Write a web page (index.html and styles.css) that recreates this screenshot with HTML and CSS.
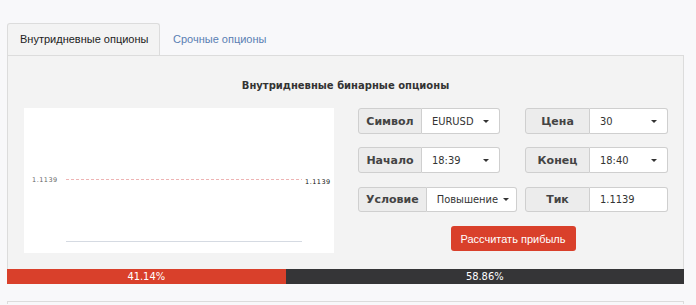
FILE: index.html
```html
<!DOCTYPE html>
<html lang="ru">
<head>
  <meta charset="UTF-8" />
  <title>Бинарные опционы</title>
  <link rel="stylesheet" href="styles.css">
</head>
<body>
  <div class="tabs">
    <div class="tab active">Внутридневные опционы</div>
    <div class="tab">Срочные опционы</div>
  </div>

  <div class="panel">
    <h2 class="title">Внутридневные бинарные опционы</h2>
    <div class="content">
      <div class="chart">
        <svg width="310" height="145" viewBox="0 0 310 145">
          <line x1="42" y1="71.5" x2="278" y2="71.5" stroke="#eeb4b4" stroke-width="1" stroke-dasharray="3,2" />
          <line x1="42" y1="133.5" x2="278" y2="133.5" stroke="#d5dae2" stroke-width="1" />
          <text x="8" y="74" class="tick">1.1139</text>
          <text x="281" y="76" class="tick dark">1.1139</text>
        </svg>
      </div>

      <div class="form">
        <div class="grid">
          <div class="group">
            <span class="addon">Символ</span>
            <span class="select">EURUSD <i class="caret"></i></span>
          </div>
          <div class="group">
            <span class="addon wide">Цена</span>
            <span class="select">30 <i class="caret"></i></span>
          </div>
          <div class="group">
            <span class="addon">Начало</span>
            <span class="select">18:39 <i class="caret"></i></span>
          </div>
          <div class="group">
            <span class="addon wide">Конец</span>
            <span class="select">18:40 <i class="caret"></i></span>
          </div>
          <div class="group short">
            <span class="addon">Условие</span>
            <span class="select auto">Повышение <i class="caret"></i></span>
          </div>
          <div class="group short">
            <span class="addon wide">Тик</span>
            <span class="select input">1.1139</span>
          </div>
        </div>
        <button class="btn">Рассчитать прибыль</button>
      </div>
    </div>
  </div>

  <div class="bar">
    <div class="bar-part up" style="width: 41.14%">41.14%</div>
    <div class="bar-part down" style="width: 58.86%">58.86%</div>
  </div>

  <div class="next-box"></div>
</body>
</html>
```

FILE: styles.css
```css
body { margin: 0; padding: 23px 12px 0 7px; background: #f8f8fa; font-family: "Liberation Sans", Arial, sans-serif; font-size: 11px; color: #333; overflow: hidden; }
.tabs { display: flex; height: 32px; }
.tab { padding: 0 13px; line-height: 32px; color: #5a7fb3; white-space: nowrap; }
.tab.active { box-sizing: border-box; width: 153px; background: #f3f3f3; border: 1px solid #dcdcdc; border-bottom: none; border-radius: 3px 3px 0 0; color: #222; line-height: 31px; padding-left: 12px; }
.panel { background: #f3f3f3; border: 1px solid #dcdcdc; border-bottom: none; padding: 22px 16px 16px; }
.title { margin: 0 0 14px; font-family: "DejaVu Sans", Verdana, sans-serif; font-size: 10px; font-weight: bold; line-height: 16px; text-align: center; color: #333; }
.content { display: flex; align-items: flex-start; }
.chart { width: 310px; height: 145px; background: #fff; }
.chart svg { display: block; }
.tick { font-family: "DejaVu Sans", Verdana, sans-serif; font-size: 6.5px; fill: #666; letter-spacing: 0.5px; }
.tick.dark { fill: #111; }
.form { margin-left: 24px; width: 310px; display: flex; flex-direction: column; align-items: center; }
.grid { display: grid; grid-template-columns: 142px 143px; column-gap: 25px; row-gap: 13px; width: 310px; }
.group { display: flex; height: 26px; }
.group.short { height: 25px; margin-top: 1px; }
.addon { flex-shrink: 0; box-sizing: border-box; min-width: 64px; padding: 0 7px; display: flex; align-items: center; justify-content: center; background: #ececec; border: 1px solid #cfcfcf; border-radius: 3px 0 0 3px; font-family: "DejaVu Sans", Verdana, sans-serif; font-weight: bold; font-size: 11px; color: #444; }
.addon.wide { width: 65px; }
.select { flex-shrink: 0; box-sizing: border-box; width: 78px; display: flex; align-items: center; justify-content: space-between; padding: 0 10px 0 10px; background: #fff; border: 1px solid #cfcfcf; border-left: none; border-radius: 0 3px 3px 0; color: #333; font-family: "DejaVu Sans Condensed", "DejaVu Sans", sans-serif; font-size: 11px; }
.select.auto { width: 90px; padding-right: 7px; }
.select.input { justify-content: flex-start; }
.caret { width: 0; height: 0; border-left: 3.5px solid transparent; border-right: 3.5px solid transparent; border-top: 3.5px solid #333; }
.btn { margin-top: 14px; height: 25px; width: 125px; padding: 0; background: #d9402b; border: none; border-radius: 3px; color: #fff; font-family: "Liberation Sans", Arial, sans-serif; font-size: 11px; }
.bar { display: flex; height: 15px; width: 677px; }
.bar-part { color: #fff; text-align: center; line-height: 15px; font-size: 11px; font-family: "DejaVu Sans Condensed", "DejaVu Sans", sans-serif; }
.bar-part.up { background: #d9402b; }
.bar-part.down { background: #353537; }
.next-box { margin-top: 17px; height: 2px; border: 1px solid #dcdcdc; border-bottom: none; background: #f8f8fa; }
```
